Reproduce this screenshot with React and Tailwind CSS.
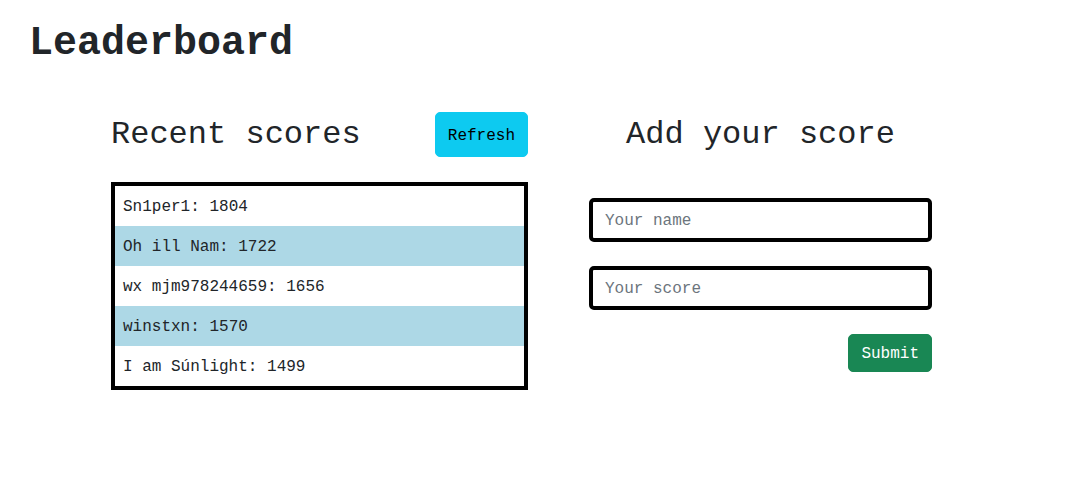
const scores = [
  { name: "Sn1per1", score: 1804 },
  { name: "Oh ill Nam", score: 1722 },
  { name: "wx mjm978244659", score: 1656 },
  { name: "winstxn", score: 1570 },
  { name: "I am Súnlight", score: 1499 },
];

export default function App() {
  return (
    <div
      className="min-h-screen bg-white text-[#212529] pt-[20px] pl-[29px]"
      style={{ fontFamily: '"Liberation Mono", "DejaVu Sans Mono", monospace' }}
    >
      <h1 className="text-[40px] leading-[48px] font-bold">Leaderboard</h1>

      <div className="flex mt-[44px] pl-[82px]">
        {/* left column */}
        <div className="w-[417px]">
          <div className="flex items-center justify-between h-[45px]">
            <h2 className="text-[32px] leading-[38px]">Recent scores</h2>
            <button className="h-[45px] px-3 pt-[2px] border border-[#0dcaf0] bg-[#0dcaf0] rounded-[5px] text-black text-base">
              Refresh
            </button>
          </div>
          <ul className="mt-[25px] border-4 border-black">
            {scores.map((s, i) => (
              <li
                key={s.name}
                className={`h-10 px-2 pt-[2px] flex items-center text-base ${
                  i % 2 === 1 ? "bg-[#add8e6]" : "bg-white"
                }`}
              >
                {s.name}: {s.score}
              </li>
            ))}
          </ul>
        </div>

        {/* right column */}
        <div className="w-[343px] ml-[61px]">
          <div className="h-[45px] flex items-center justify-center">
            <h2 className="text-[32px] leading-[38px]">Add your score</h2>
          </div>
          <form className="mt-[41px] flex flex-col" onSubmit={(e) => e.preventDefault()}>
            <input
              type="text"
              placeholder="Your name"
              className="h-[44px] border-4 border-black rounded-[5px] px-3 pt-[2px] text-base placeholder:text-[#6c757d] outline-none"
            />
            <input
              type="text"
              placeholder="Your score"
              className="mt-6 h-[44px] border-4 border-black rounded-[5px] px-3 pt-[2px] text-base placeholder:text-[#6c757d] outline-none"
            />
            <div className="flex justify-end mt-6">
              <button
                type="submit"
                className="h-[38px] px-3 pt-[2px] border border-[#198754] bg-[#198754] text-white rounded-[5px] text-base"
              >
                Submit
              </button>
            </div>
          </form>
        </div>
      </div>
    </div>
  );
}
